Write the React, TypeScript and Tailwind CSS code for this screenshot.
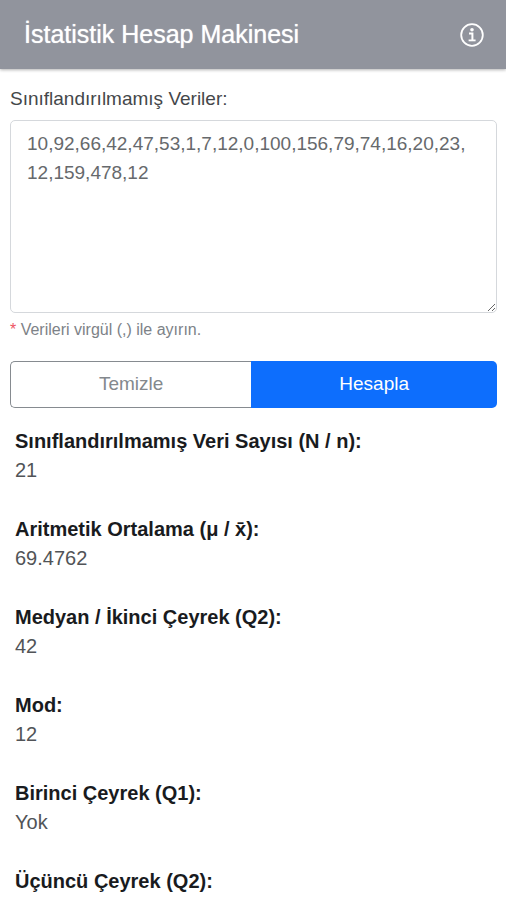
import { useState } from "react";

const results = [
  { label: "Sınıflandırılmamış Veri Sayısı (N / n):", value: "21" },
  { label: "Aritmetik Ortalama (μ / x̄):", value: "69.4762" },
  { label: "Medyan / İkinci Çeyrek (Q2):", value: "42" },
  { label: "Mod:", value: "12" },
  { label: "Birinci Çeyrek (Q1):", value: "Yok" },
  { label: "Üçüncü Çeyrek (Q2):", value: "" },
];

function InfoIcon() {
  return (
    <svg width="24" height="24" viewBox="0 0 24 24" fill="none" stroke="currentColor" aria-hidden="true">
      <circle cx="12" cy="12" r="10.8" strokeWidth="1.8" />
      <circle cx="12" cy="6.8" r="1.8" fill="currentColor" stroke="none" />
      <path d="M9 10.6h3.4v6.6" strokeWidth="2" />
      <path d="M8.6 17.4h7" strokeWidth="1.8" />
    </svg>
  );
}

export default function App() {
  const [data, setData] = useState(
    "10,92,66,42,47,53,1,7,12,0,100,156,79,74,16,20,23,12,159,478,12"
  );

  return (
    <div className="h-screen overflow-hidden bg-white font-['Liberation_Sans',Arial,sans-serif] text-[#212529]">
      <header className="flex h-[69px] items-center justify-between bg-[#91949d] pr-[22px] pl-6 text-white shadow-[0_1px_3px_rgba(0,0,0,0.3)]">
        <h1 className="text-[25px] font-medium [text-shadow:0_0_1px_rgba(255,255,255,0.8)]">
          İstatistik Hesap Makinesi
        </h1>
        <button type="button" aria-label="Bilgi">
          <InfoIcon />
        </button>
      </header>
      <main className="pt-[15px] pr-[9px] pl-[10px]">
        <label htmlFor="data" className="block text-[19px] leading-[29px] text-[#44474a]">
          Sınıflandırılmamış Veriler:
        </label>
        <textarea
          id="data"
          spellCheck={false}
          value={data}
          onChange={(e) => setData(e.target.value)}
          className="mt-[7px] block h-[193px] w-full resize-y rounded-[5px] border border-[#d5d8dc] bg-white py-2 pr-6 pl-4 text-[19px] leading-[29px] break-all text-[#66696c] outline-none"
        />
        <p className="mt-[5px] text-base leading-6 text-[#7d8287]">
          <span className="text-[#ee5563]">*</span> Verileri virgül (,) ile ayırın.
        </p>
        <div className="mt-[19px] flex h-[47px] text-[19px]">
          <button
            type="button"
            onClick={() => setData("")}
            className="flex-auto rounded-l-[5px] border border-r-0 border-[#868b90] text-[#83888d]"
          >
            Temizle
          </button>
          <button type="button" className="flex-auto rounded-r-[5px] bg-[#0d6efd] text-white">
            Hesapla
          </button>
        </div>
        <dl className="mt-[19px] flex flex-col gap-[30px] px-[5px] text-[20px] leading-[29px]">
          {results.map((item) => (
            <div key={item.label}>
              <dt className="font-bold text-[#191b1e]">{item.label}</dt>
              <dd className="text-[#515457]">{item.value}</dd>
            </div>
          ))}
        </dl>
      </main>
    </div>
  );
}
